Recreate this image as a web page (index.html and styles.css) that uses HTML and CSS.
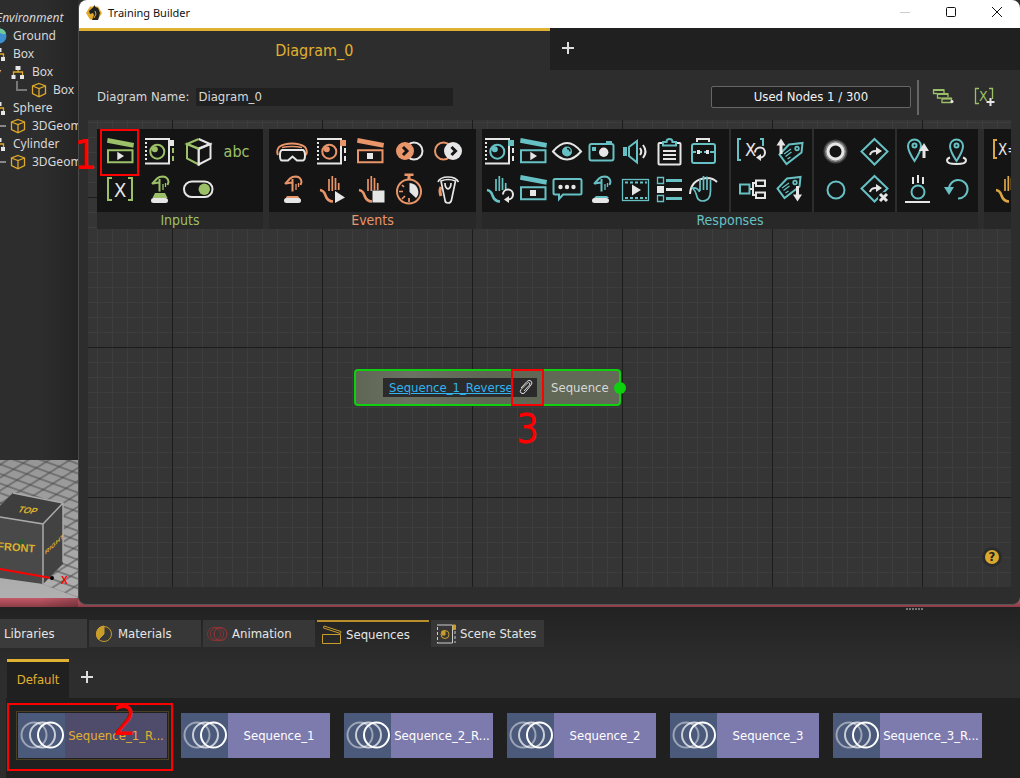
FILE: index.html
```html
<!DOCTYPE html>
<html lang="en">
<head>
    <meta charset="UTF-8">
    <meta name="viewport" content="width=device-width, initial-scale=1.0">
    <title>Training Builder</title>
    <link rel="stylesheet" href="styles.css">
</head>
<body>
    <!-- Shared icons: currentColor is the group colour, .w is the light part -->
    <svg class="sprite" aria-hidden="true">
        <symbol id="clapper" viewBox="0 0 32 32">
            <path class="c" d="M3.7 2 30 7l-.7 4.7L3 6.7z"/>
            <path class="s" d="M4 14.3h24.5v12H4z"/>
        </symbol>
        <symbol id="clapper-play" viewBox="0 0 32 32">
            <use href="#clapper"/><path class="w" d="M13.3 15.7 20 20l-6.7 4.3z"/>
        </symbol>
        <symbol id="clapper-stop" viewBox="0 0 32 32">
            <use href="#clapper"/><path class="w" d="M13 17h6v6h-6z"/>
        </symbol>
        <symbol id="scene-frame" viewBox="0 0 32 32">
            <path class="ws" d="M2 3h24v24.500H2"/>
            <path class="ws" stroke-dasharray="2 2" d="M3 6v20"/>
            <circle class="s" cx="14.300" cy="15.700" r="7"/>
            <circle class="c" cx="11.800" cy="13.200" r="3"/>
        </symbol>
        <symbol id="scene" viewBox="0 0 32 32">
            <use href="#scene-frame"/>
            <path class="c" d="M25 4h6v6h-6z"/>
            <path class="ws" stroke-dasharray="5 3" d="M30 12v14"/>
        </symbol>
        <symbol id="press" viewBox="0 0 32 32">
            <path class="s" d="M9 11l5-5.500Q16 3.500 20 3.500q5 .5 5.500 5.500l-1 3"/>
            <path class="s" d="M16.500 6v12.500M10 10.500l5.500-1"/>
            <path class="s thin" d="M20 11v6M22.500 10v4"/>
        </symbol>
        <symbol id="hand" viewBox="0 0 32 32">
            <path class="s mid" d="M14 6v12M17.300 3v15M20.500 5v12M23.700 10v7"/>
            <path class="s big" d="M5 17q4 .5 5.500 5.500 2 6 7.500 6"/>
        </symbol>
        <symbol id="turn" viewBox="0 0 32 32">
            <path class="ws" d="M20 21.500a5 5 0 1 1 5 5"/><path class="w" d="M26 23v7l-5-3.500z"/>
        </symbol>
        <symbol id="diamond" viewBox="0 0 32 32">
            <path class="s" d="M15.500 3 28.500 15.500l-13 13-13-13z"/>
            <path class="ws" d="M11 19q1-4.500 7-4"/><path class="w" d="M17 11l6 4-6 4z"/>
        </symbol>
        <symbol id="tag" viewBox="0 0 32 32">
            <path class="s" d="M15 8.500 28.500 7l-1 9.500L12.500 28 5.500 18.500z"/>
            <circle class="s mid" cx="23" cy="12.500" r="1.800"/>
            <path class="s thin" d="M10 18l7-5M11.500 20.500l6-4.500M13.500 23l3-2"/>
        </symbol>
        <symbol id="pin" viewBox="0 0 32 32">
            <path class="s" d="M16.500 25Q10 15 10 10a6.500 6.500 0 0 1 13 0q0 5-6.500 15z"/>
            <circle class="s" cx="16.500" cy="9.500" r="2"/>
        </symbol>
        <symbol id="cube" viewBox="0 0 16 16">
            <path class="s thin" d="M8 1.500l6.500 2.500v7.500L8 14.800l-6.500-3.300V4zM1.500 4 8 6.500 14.500 4M8 6.500v8"/>
        </symbol>
        <symbol id="tree-node" viewBox="0 0 16 16">
            <path class="s thin" d="M3.500 11V8h9v3M8 4v4"/>
            <path class="w" d="M5.500 2h5v4h-5zM1.500 11h4v4h-4zM10 11h4v4h-4z"/>
        </symbol>
        <symbol id="rings" viewBox="0 0 44 28">
            <circle cx="14" cy="14" r="12.500" opacity=".45"/>
            <circle cx="22.500" cy="14" r="12.500" opacity=".7"/>
            <circle cx="30.500" cy="14" r="12.500"/>
        </symbol>
    </svg>

    <main class="workspace">
        <aside class="sidebar">
            <ul class="tree">
                <li class="root">Environment</li>
                <li class="d1"><svg class="icon16" viewBox="0 0 16 16"><circle cx="8" cy="8" r="7.500" fill="#3d8fd0"/><path d="M8 .5a7 7 0 0 1 7 5l-2 1-5-2z" fill="#6fc79a"/></svg>Ground</li>
                <li class="d1"><svg class="icon16"><use href="#tree-node"/></svg>Box</li>
                <li class="d2"><span class="arrow">▾</span><svg class="icon16"><use href="#tree-node"/></svg>Box</li>
                <li class="d3"><span class="elbow"></span><svg class="icon16"><use href="#cube"/></svg>Box</li>
                <li class="d1"><svg class="icon16"><use href="#tree-node"/></svg>Sphere</li>
                <li class="d2"><span class="dash"></span><svg class="icon16"><use href="#cube"/></svg>3DGeometry</li>
                <li class="d1"><svg class="icon16"><use href="#tree-node"/></svg>Cylinder</li>
                <li class="d2"><span class="dash"></span><svg class="icon16"><use href="#cube"/></svg>3DGeometry</li>
            </ul>
            <svg class="viewport" viewBox="0 0 79 138" preserveAspectRatio="xMinYMin slice">
                <defs>
                    <linearGradient id="floor" x1="0" y1="0" x2="0" y2="1"><stop offset="0" stop-color="#969696"/><stop offset="1" stop-color="#b0b0b0"/></linearGradient>
                    <pattern id="lines-a" width="20" height="9" patternUnits="userSpaceOnUse" patternTransform="rotate(20)"><path d="M0 4h20" stroke="#4c4c4c"/></pattern>
                    <pattern id="lines-b" width="20" height="11" patternUnits="userSpaceOnUse" patternTransform="rotate(-32)"><path d="M0 4h20" stroke="#4c4c4c"/></pattern>
                </defs>
                <path d="M0 0h79v138H0z" fill="url(#floor)"/>
                <path d="M0 0h79v138L0 108z" fill="url(#lines-a)"/>
                <path d="M0 0h79v138L0 108z" fill="url(#lines-b)"/>
                <path d="M0 46 13 33l50 10v61l-20 20-43-6z" fill="#494949"/>
                <path d="M0 46 13 33l50 10-20 21-43-7z" fill="#3e3e3e"/>
                <path d="M43 64l20-21v59l-20 22z" fill="#424242"/>
                <path d="M0 57l43 7v60M43 64l20-21M13 33l50 10v59" fill="none" stroke="#aaa" stroke-width="1.500"/>
                <path d="M19 80h5l-3 8zM0 107l8-7" fill="#265f2b" stroke="#265f2b"/>
                <text class="face" x="-3" y="90" font-size="11" transform="rotate(4 0 90)">FRONT</text>
                <text class="face" x="0" y="0" font-size="9" transform="translate(17 52) rotate(7) skewX(-25)">TOP</text>
                <text class="face" x="0" y="0" font-size="6" transform="translate(45 95) skewY(-43)">RIGHT</text>
                <path d="M0 109l51 9" stroke="#f00" stroke-width="2"/>
                <circle cx="52" cy="118" r="2" fill="#000"/>
                <text class="axis" x="61" y="124" font-size="10">X</text>
            </svg>
        </aside>

        <section class="window">
            <header class="titlebar">
                <svg class="logo" viewBox="0 0 16 16"><path d="M4 1.500h8L16 8l-4 6.500H4L0 8z" fill="#e0a92a"/><path d="M3 6 7 2.500 8.500 0l1 2L12 3l2 5-2 7H6l2-5-1-2-3 1z" fill="#222"/><path d="M9 6l1 3-2 4" stroke="#e0a92a" fill="none"/></svg>
                <h1>Training Builder</h1>
                <button class="win-btn min" aria-label="Minimize"><svg viewBox="0 0 10 10"><path d="M0 5.500h10"/></svg></button>
                <button class="win-btn" aria-label="Maximize"><svg viewBox="0 0 10 10"><rect x=".5" y=".5" width="9" height="9" rx="1"/></svg></button>
                <button class="win-btn" aria-label="Close"><svg viewBox="0 0 10 10"><path d="M0 0l10 10M10 0 0 10"/></svg></button>
            </header>
            <nav class="diagram-tabs">
                <button class="diagram-tab">Diagram_0</button>
                <button class="add" aria-label="Add diagram"><svg viewBox="0 0 14 14"><path d="M7 1v12M1 7h12"/></svg></button>
            </nav>
            <div class="name-row">
                <label for="diagram-name">Diagram Name:</label>
                <input type="text" id="diagram-name" value="Diagram_0">
                <button class="used-nodes">Used Nodes 1 / 300</button>
                <span class="divider"></span>
                <button class="tool inputs" aria-label="Cascade"><svg viewBox="0 0 32 32"><path class="s thin" d="M10 12.500H6.500V9H17v3M14 17h-3.500v-4H21v3M15 17.500h9.500v4H15z"/><path class="c" d="M6 8h11v2H6zM10 12h11v2H10zM14.500 16.500h10v2h-10z"/><circle class="w" cx="25" cy="20.500" r="1.500"/></svg></button>
                <button class="tool inputs" aria-label="Add variable"><svg viewBox="0 0 32 32"><path class="s thin" d="M10 7.500H6.500v15H10M20 7.500h3.500V18"/><text class="c" x="10" y="20" font-size="14">X</text><path class="ws" d="M21.500 17v8M17.500 21h8"/></svg></button>
            </div>

            <div class="canvas">
                <div class="toolbar">
                    <section class="group inputs">
                        <div class="panels">
                            <div class="panel cols-4">
                                <button class="tool" aria-label="Sequence"><svg><use href="#clapper-play"/></svg></button>
                                <button class="tool" aria-label="Scene state"><svg viewBox="0 0 32 32"><use href="#scene-frame"/><path class="w" d="M26 4h5v6h-5z"/><path class="s" stroke-dasharray="5 3" d="M30 12v14"/></svg></button>
                                <button class="tool" aria-label="Object"><svg viewBox="0 0 32 32"><path class="s" d="M5 8v14.500l11.700 6V13z"/><path class="ws" d="M28.500 8v14.500l-11.800 6V13z"/><path class="ws" d="M16.700 3 28 8l-11.300 4.500"/><path class="s" d="M16.700 3 5 8l11.700 4.500"/></svg></button>
                                <button class="tool abc">abc</button>
                                <button class="tool" aria-label="Variable"><svg viewBox="0 0 32 32"><path class="s" d="M8 5H4v22h4M24 5h4v22h-4"/><text class="w" x="10" y="24" font-size="20">X</text></svg></button>
                                <button class="tool" aria-label="Button"><svg viewBox="0 0 32 32"><use href="#press"/><path class="c" d="M12 20h10l2.500 5h-15z"/><rect class="w" x="8" y="25" width="17" height="5" rx="2.500"/></svg></button>
                                <button class="tool" aria-label="Toggle"><svg viewBox="0 0 32 32"><rect class="ws" x="2" y="8.500" width="28.500" height="15.500" rx="7.700"/><circle class="c" cx="22.300" cy="16.300" r="5.700"/></svg></button>
                            </div>
                        </div>
                        <h2>Inputs</h2>
                    </section>

                    <section class="group events">
                        <div class="panels">
                            <div class="panel cols-5">
                                <button class="tool" aria-label="Headset"><svg viewBox="0 0 32 32"><path class="s" d="M2 19q-2-4 1-8 5-3.500 13-3.500T29 11q3 4 1 8"/><path class="s thin" d="M6 11.500q10-2 20 0"/><path class="ws" d="M6 14h21q2 1 2 5.500t-2 5h-6l-4.500-4-4.500 4H6q-2 0-2-5T6 14z"/></svg></button>
                                <button class="tool" aria-label="Scene event"><svg><use href="#scene"/></svg></button>
                                <button class="tool" aria-label="Sequence stopped"><svg><use href="#clapper-stop"/></svg></button>
                                <button class="tool" aria-label="Enter"><svg viewBox="0 0 32 32"><circle class="ws" cx="21" cy="15" r="8.500"/><circle class="c" cx="12" cy="15" r="9"/><path class="k" d="M10 11l4 4-4 4"/></svg></button>
                                <button class="tool" aria-label="Leave"><svg viewBox="0 0 32 32"><circle class="s" cx="11.500" cy="15" r="8.500"/><circle class="w" cx="21" cy="15" r="9"/><path class="k" d="M19.500 11l4 4-4 4"/></svg></button>
                                <button class="tool" aria-label="Pressed"><svg viewBox="0 0 32 32"><use href="#press"/><path class="c" d="M11 23h11l2 3H9z"/><rect class="w" x="8" y="25" width="17" height="5" rx="2.500"/></svg></button>
                                <button class="tool" aria-label="Grab start"><svg viewBox="0 0 32 32"><use href="#hand"/><path class="w" d="M20 18l10 6.500L20 30z"/></svg></button>
                                <button class="tool" aria-label="Grab stop"><svg viewBox="0 0 32 32"><use href="#hand"/><path class="w" d="M18.500 17.500h12v12h-12z"/></svg></button>
                                <button class="tool" aria-label="Timer"><svg viewBox="0 0 32 32"><circle class="s" cx="16" cy="18.500" r="12"/><path class="c" d="M11.500.5h9V3h-9zM14.500 3h3v3h-3z"/><path class="w" d="M16.500 10a9 9 0 0 1 6.500 15l-6.500-6z"/><path class="s mid" d="M6 18.500h4M16 29v-4M9 12l2 2M9 26l3-3"/></svg></button>
                                <button class="tool" aria-label="Flashlight"><svg viewBox="0 0 32 32"><path class="s hv" d="M9 14q-2 4 0 9"/><path class="ws mid" d="M6 9Q8 4 16 4t10.500 5M9 8l4 19q0 3 3 3t3.500-3l4-19Q16 5 9 8zM13 10q0 5 3 6 3-1 3-6"/></svg></button>
                            </div>
                        </div>
                        <h2>Events</h2>
                    </section>

                    <section class="group responses">
                        <div class="panels">
                            <div class="panel cols-7">
                                <button class="tool" aria-label="Set scene state"><svg><use href="#scene"/></svg></button>
                                <button class="tool" aria-label="Play sequence"><svg><use href="#clapper-play"/></svg></button>
                                <button class="tool" aria-label="Visibility"><svg viewBox="0 0 32 32"><path class="ws" d="M2 15.500Q9 7 16 7t14 8.500Q23 23.500 16 23.500T2 15.500z"/><circle class="c" cx="16" cy="15.500" r="5"/><path class="k thin" d="M16 12.500q3 0 3 3"/></svg></button>
                                <button class="tool" aria-label="Camera"><svg viewBox="0 0 32 32"><rect class="s" x="4.500" y="8" width="24" height="16.500" rx="2"/><path class="c" d="M21 5h6v2.500h-6zM7 11h4v4H7z"/><circle class="w" cx="18.700" cy="16.300" r="4.700"/></svg></button>
                                <button class="tool" aria-label="Sound"><svg viewBox="0 0 32 32"><path class="c" d="M4 11h4v9H4z"/><path class="s" d="M10 11 18 5v21.500L10 20z"/><path class="ws" d="M21 12q2.500 3.500 0 7M24 9q5 6.500 0 13"/></svg></button>
                                <button class="tool" aria-label="Checklist"><svg viewBox="0 0 32 32"><rect class="ws" x="5.500" y="7" width="22" height="21.500" rx="1"/><path class="kf" d="M10 5h13v6H10z"/><path class="s" d="M10 9.500V6h3.500q0-3 3-3t3 3H23v3.500z"/><path class="ws" d="M10 15h13M10 19h13M10 23h13"/></svg></button>
                                <button class="tool" aria-label="Inventory"><svg viewBox="0 0 32 32"><path class="ws" d="M10 6V3h12v3"/><rect class="s" x="5" y="8" width="23" height="19" rx="2"/><path class="s" stroke-dasharray="4 2" d="M5 16h23"/><path class="w" d="M10 14h3v4h-3zM19 14h3v4h-3z"/></svg></button>
                                <button class="tool" aria-label="Reset hand"><svg viewBox="0 0 32 32"><use href="#hand" x="-1"/><path class="kf" d="M18 17.500h12V32H18z"/><use href="#turn"/></svg></button>
                                <button class="tool" aria-label="Stop sequence"><svg><use href="#clapper-stop"/></svg></button>
                                <button class="tool" aria-label="Message"><svg viewBox="0 0 32 32"><path class="s" d="M4 6h25q1.500 0 1.500 1.500V20q0 1.500-1.500 1.500H12L8 26v-4.500H4q-1.500 0-1.500-1.500V7.500Q2.500 6 4 6z"/><circle class="w" cx="9.500" cy="14" r="2.200"/><circle class="w" cx="16" cy="14" r="2.200"/><circle class="w" cx="22.500" cy="14" r="2.200"/></svg></button>
                                <button class="tool" aria-label="Press button"><svg viewBox="0 0 32 32"><use href="#press"/><path class="c" d="M11 23h11l2 2H9z"/><rect class="w" x="7" y="25" width="17" height="5" rx="2.500"/></svg></button>
                                <button class="tool" aria-label="Video"><svg viewBox="0 0 32 32"><rect class="s thin" x="3.500" y="6.500" width="26" height="21"/><path class="s" stroke-dasharray="3 2" d="M6 9.500h22M6 25h22"/><path class="w" d="M13 11.500l9 5.500-9 5.500z"/></svg></button>
                                <button class="tool" aria-label="Options"><svg viewBox="0 0 32 32"><path class="s thin" d="M4.500 4.500h6v6h-6zM4.500 22.500h6v6h-6z"/><path class="w" d="M4 13h7v7H4zM13 15h16v3H13z"/><path class="c" d="M13 6h16v3H13zM13 24h16v3H13z"/></svg></button>
                                <button class="tool" aria-label="Wave"><svg viewBox="0 0 32 32"><path class="ws" d="M3 21Q4 6 20 5q6 0 10 4"/><path class="s mid" d="M13 6v12M16.500 3v14M20 3.500V17M23.500 7v11q0 10-8 10-5 0-6-6-1-4-4-7 5-1 7 4"/></svg></button>
                            </div>
                            <div class="panel cols-2">
                                <button class="tool" aria-label="Reset variable"><svg viewBox="0 0 32 32"><path class="s" d="M6 3H3v21h3M25 3h3v7"/><text class="w" x="10" y="20" font-size="18">X</text><use href="#turn" y="-5"/></svg></button>
                                <button class="tool" aria-label="Tag add"><svg viewBox="0 0 32 32"><use href="#tag"/><path class="w" d="M7 2.500l4.500 7h-3V18h-3V9.500h-3z"/></svg></button>
                                <button class="tool" aria-label="Hierarchy"><svg viewBox="0 0 32 32"><path class="s" d="M5 11.500h9.500v9H5z"/><path class="ws" d="M15 16h3M21 10h-3v12h3M21 7.500h9V13h-9zM21 19.500h9V25h-9z"/></svg></button>
                                <button class="tool" aria-label="Tag remove"><svg viewBox="0 0 32 32"><use href="#tag" x="-2" y="-3"/><path class="w" d="M23.500 28.500l4.500-7h-3V13h-3v8.500h-3z"/></svg></button>
                            </div>
                            <div class="panel cols-2 shift">
                                <button class="tool" aria-label="Glow on"><svg viewBox="0 0 32 32"><circle cx="15.500" cy="15.500" r="12" fill="#444"/><circle cx="15.500" cy="15.500" r="10.500" fill="#888"/><circle class="kf" cx="15.500" cy="15.500" r="8"/><circle class="ws hv" cx="15.500" cy="15.500" r="7.500"/></svg></button>
                                <button class="tool" aria-label="Go to"><svg><use href="#diamond"/></svg></button>
                                <button class="tool" aria-label="Glow off"><svg viewBox="0 0 32 32"><circle class="s" cx="16" cy="17" r="8.500"/></svg></button>
                                <button class="tool" aria-label="Cancel go to"><svg viewBox="0 0 32 32"><use href="#diamond"/><circle class="kf" cx="25" cy="25" r="6"/><path class="ws hv" d="M21 21l7 7M28 21l-7 7"/></svg></button>
                            </div>
                            <div class="panel cols-2">
                                <button class="tool" aria-label="Teleport"><svg viewBox="0 0 32 32"><use href="#pin" x="-3"/><path class="w" d="M23 7l5 8h-3.500v7h-3v-7H18z"/></svg></button>
                                <button class="tool" aria-label="Location"><svg viewBox="0 0 32 32"><path class="ws" d="M10 21.500q-3 1-3 3 0 3.500 9.500 3.500t9.500-3.500q0-2-3-3"/><use href="#pin"/></svg></button>
                                <button class="tool" aria-label="Drop"><svg viewBox="0 0 32 32"><circle class="s" cx="17" cy="19" r="6.500"/><path class="ws" d="M12 4v7M17 2v8M22 4v7M4 29h25"/></svg></button>
                                <button class="tool" aria-label="Undo"><svg viewBox="0 0 32 32"><path class="s" d="M9 17a9.300 9.300 0 1 1 9 8.500"/><path class="c" d="M4 14h10l-5 8z"/></svg></button>
                            </div>
                        </div>
                        <h2>Responses</h2>
                    </section>

                    <section class="group variables">
                        <div class="panels">
                            <div class="panel cols-1">
                                <button class="tool" aria-label="Compare"><svg viewBox="0 0 32 32"><path class="s" d="M6 4H3v18h3"/><text class="w" x="7" y="19" font-size="15">X=</text></svg></button>
                                <button class="tool" aria-label="Hand"><svg><use href="#hand"/></svg></button>
                            </div>
                        </div>
                    </section>
                </div>

                <div class="node">
                    <div class="node-field">
                        <a href="#">Sequence_1_Reverse</a>
                        <button aria-label="Attach"><svg viewBox="0 0 16 16"><path d="M3 9 9 2.500q2-2 4-.5 2 2 0 4L7 13.500q-2 2-4 .5-1.500-1.500 0-3.500L9.500 4q1-1 2 0 .8 1 0 2L6 12"/></svg></button>
                    </div>
                    <span>Sequence</span>
                    <i class="port"></i>
                </div>
                <button class="help" aria-label="Help">?</button>
            </div>

            <div class="mark mark-1"></div>
            <span class="num num-1">1</span>
            <div class="mark mark-3"></div>
            <span class="num num-3">3</span>
        </section>
    </main>

    <section class="libraries">
        <div class="grip"></div>
        <nav class="lib-tabs">
            <h2>Libraries</h2>
            <button><svg viewBox="0 0 20 20"><circle cx="10" cy="10" r="7.500"/><path class="c" d="M10 2v8l-5.500 5.500Q2 13 2.500 9 3.500 2.500 10 2z"/></svg>Materials</button>
            <button class="animation"><svg viewBox="0 0 22 16"><circle cx="8" cy="8" r="6.500" opacity=".6"/><circle cx="11" cy="8" r="6.500" opacity=".7"/><circle cx="14.500" cy="8" r="6.500"/></svg>Animation</button>
            <button class="active"><svg viewBox="0 0 20 20"><path d="M.5 9.500h18v9H.5zM2 1l17 5.500-.5 2L1.500 3z"/></svg>Sequences</button>
            <button class="scene-tab"><svg viewBox="0 0 20 20"><path d="M1 1h15.500v18H1" stroke="#ccc"/><path d="M1.500 3v16M19 7v12" stroke="#ccc" stroke-dasharray="3 2"/><circle cx="9" cy="10.500" r="4"/><path class="c" d="M17 1h2.500v4.500H17zM6 7h3v4H6z"/></svg>Scene States</button>
        </nav>
        <nav class="lib-groups">
            <button class="default">Default</button>
            <button class="add" aria-label="Add group"><svg viewBox="0 0 14 14"><path d="M7 1v12M1 7h12"/></svg></button>
        </nav>
        <div class="cards">
            <button class="card selected"><span class="thumb"><svg class="rings"><use href="#rings"/></svg></span><span class="name">Sequence_1_R...</span></button>
            <button class="card"><span class="thumb"><svg class="rings"><use href="#rings"/></svg></span><span class="name">Sequence_1</span></button>
            <button class="card"><span class="thumb"><svg class="rings"><use href="#rings"/></svg></span><span class="name">Sequence_2_R...</span></button>
            <button class="card"><span class="thumb"><svg class="rings"><use href="#rings"/></svg></span><span class="name">Sequence_2</span></button>
            <button class="card"><span class="thumb"><svg class="rings"><use href="#rings"/></svg></span><span class="name">Sequence_3</span></button>
            <button class="card"><span class="thumb"><svg class="rings"><use href="#rings"/></svg></span><span class="name">Sequence_3_R...</span></button>
            <div class="mark mark-2"></div>
            <span class="num num-2">2</span>
        </div>
    </section>
</body>
</html>
```
FILE: styles.css
```css
* {
    box-sizing: border-box;
}
body {
    margin: 0;
    height: 100vh;
    display: flex;
    flex-direction: column;
    overflow: hidden;
    background: #2d2d2d;
    color: #d8d8d8;
    font: 13px/18px "DejaVu Sans Condensed", "Noto Sans", sans-serif;
}
button, input {
    font: inherit;
    color: inherit;
    background: none;
    border: 0;
    padding: 0;
}
h1, h2 {
    margin: 0;
    font-size: 13px;
    font-weight: normal;
}
svg {
    flex: none;
    fill: none;
}
.sprite {
    position: absolute;
    width: 0;
    height: 0;
}

/* icon parts */
.c { fill: currentColor; }
.s { fill: none; stroke: currentColor; stroke-width: 2; }
.w { fill: #e6e6e6; }
.ws { fill: none; stroke: #e6e6e6; stroke-width: 2; }
.k { fill: none; stroke: #141414; stroke-width: 3; }
.kf { fill: #141414; }
.thin { stroke-width: 1.3; }
.mid { stroke-width: 1.7; }
.big { stroke-width: 2.6; }
.hv { stroke-width: 3; }

.workspace {
    flex: 1;
    min-height: 0;
    display: flex;
    background: linear-gradient(to top, #8c3c46 0, #c45a68 9px, #2d2d2d 9px);
}

/* scene tree */
.sidebar {
    width: 78px;
    flex: none;
    display: flex;
    flex-direction: column;
    justify-content: space-between;
    overflow: hidden;
    padding-bottom: 9px;
    background: linear-gradient(to right, transparent 40px, rgba(0, 0, 0, 0.2));
}
.tree {
    list-style: none;
    margin: 8px 0 0 -10px;
    padding: 0;
    font-family: "Noto Sans", "Open Sans", sans-serif;
    font-size: 12px;
    white-space: nowrap;
}
.tree li {
    display: flex;
    align-items: center;
    gap: 6px;
    height: 18px;
    padding-top: 1px;
}
.tree .root {
    padding-left: 6px;
    font-style: italic;
}
.tree .d1 {
    padding-left: 1px;
}
.tree .d2 {
    padding-left: 5px;
}
.tree .d3 {
    padding-left: 26px;
}
.arrow {
    width: 11px;
    margin-right: -2px;
}
.dash {
    flex: none;
    width: 11px;
    height: 2px;
    margin-right: -2px;
    background: #888;
}
.elbow {
    flex: none;
    width: 11px;
    height: 10px;
    margin-top: -8px;
    margin-right: -2px;
    border-left: 2px solid #777;
    border-bottom: 2px solid #777;
}
.icon16 {
    width: 16px;
    height: 16px;
    color: #e0a92a;
}
.viewport {
    width: 79px;
    height: 138px;
}
.face, .axis {
    font-family: "Liberation Sans", Arial, sans-serif;
    font-weight: bold;
    fill: #dcb02e;
}
.axis {
    fill: #f00;
}

/* training builder window */
.window {
    position: relative;
    flex: 1;
    min-width: 0;
    display: flex;
    flex-direction: column;
    margin-bottom: 2px;
    border-left: 1px solid #4a4a4a;
    border-bottom: 1px solid #555;
    border-radius: 8px;
    background: #2d2d2d;
}
.titlebar {
    height: 28px;
    display: flex;
    align-items: center;
    background: #fff;
    color: #111;
    border-radius: 8px 8px 0 0;
    padding-bottom: 2px;
}
.titlebar h1 {
    flex: 1;
    font-family: "Noto Sans", "Open Sans", sans-serif;
    font-size: 11px;
}
.logo {
    width: 16px;
    height: 16px;
    margin: 0 6px 0 7px;
}
.win-btn {
    width: 46px;
    height: 26px;
}
.win-btn svg {
    width: 10px;
    height: 10px;
    stroke: #111;
    overflow: visible;
}
.win-btn.min svg {
    stroke: #ccc;
}
.diagram-tabs {
    display: flex;
    height: 42px;
    background: #202020;
}
.diagram-tab {
    width: 50%;
    background: #2d2d2d;
    border-top: 3px solid #e0b030;
    color: #e0b030;
    font-size: 16px;
    line-height: 22px;
}
.add {
    width: 36px;
    padding-bottom: 4px;
}
.add svg {
    width: 14px;
    height: 14px;
    stroke: #ddd;
    stroke-width: 2;
    vertical-align: middle;
}
.name-row {
    display: flex;
    align-items: center;
    height: 50px;
    padding: 4px 14px 0 18px;
}
.name-row input {
    width: 257px;
    height: 18px;
    margin-left: 7px;
    margin-right: auto;
    padding: 0 2px;
    background: #202020;
}
.used-nodes {
    width: 200px;
    height: 22px;
    margin-right: 6px;
    color: #f2f2f2;
    background: #202020;
    border: 1px solid #666;
    border-radius: 2px;
}
.divider {
    width: 2px;
    height: 35px;
    margin-right: 3px;
    background: #666;
}

/* node canvas */
.canvas {
    position: relative;
    flex: 1;
    min-height: 0;
    margin: 0 9px 17px 9px;
    padding: 9px 0 0 9px;
    overflow: hidden;
    background-color: #353535;
    background-image:
        linear-gradient(to right, #1c1c1c 1px, transparent 1px),
        linear-gradient(to bottom, #1c1c1c 1px, transparent 1px),
        linear-gradient(to right, #3d3d3d 1px, transparent 1px),
        linear-gradient(to bottom, #3d3d3d 1px, transparent 1px);
    background-size: 150px 150px, 150px 150px, 15px 15px, 15px 15px;
    background-position: 84px 77px, 84px 77px, 9px 2px, 9px 2px;
}
.toolbar {
    display: flex;
    gap: 6px;
    background: #2d2d2d;
}
.group {
    flex: none;
    background: #282828;
}
.group h2 {
    height: 17px;
    font-size: 14px;
    line-height: 17px;
    text-align: center;
}
.panels {
    display: flex;
    gap: 2px;
    background: #2d2d2d;
}
.panel {
    display: grid;
    grid-auto-rows: 37px;
    padding: 4px 7px 5px 3px;
    background: #141414;
}
.cols-1 { grid-template-columns: 39px; }
.cols-4 { grid-template-columns: repeat(4, 39px); }
.cols-5 { grid-template-columns: repeat(5, 39px); padding-right: 9px; }
.cols-7 { grid-template-columns: repeat(7, 34px); padding-left: 0; padding-right: 9px; }
.cols-2 { grid-template-columns: repeat(2, 39px); padding-left: 0; padding-right: 3px; }
.shift { padding-left: 2px; padding-right: 1px; }
.inputs { color: #9cc068; }
.events { color: #e9956a; }
.responses { color: #67c1c4; }
.variables { color: #dba544; }
.tool {
    display: flex;
    align-items: center;
    justify-content: center;
}
.tool svg {
    width: 32px;
    height: 32px;
}
.name-row .tool {
    width: 42px;
}
.abc {
    font-size: 16px;
}

.node {
    position: absolute;
    left: 266px;
    top: 249px;
    display: flex;
    align-items: center;
    width: 267px;
    height: 37px;
    padding-left: 27px;
    border: 2px solid #0fd00f;
    border-radius: 4px;
    background: linear-gradient(to right, #5f6654, #6b7263 20%, #5f6654 50%, #636a58);
}
.node-field {
    display: flex;
    align-items: center;
    width: 154px;
    height: 19px;
    margin-right: 14px;
    padding-left: 6px;
    background: #2b2b2b;
}
.node-field a {
    flex: none;
    width: 125px;
    color: #30b4f0;
    text-underline-offset: 1px;
}
.node-field button {
    width: 23px;
    height: 18px;
}
.node-field svg {
    width: 16px;
    height: 16px;
    stroke: #ddd;
    vertical-align: top;
    overflow: visible;
}
.port {
    position: absolute;
    right: -7px;
    top: 11px;
    width: 12px;
    height: 12px;
    border-radius: 50%;
    background: #0fd00f;
}
.help {
    position: absolute;
    right: 12px;
    bottom: 23px;
    width: 14px;
    height: 14px;
    border-radius: 50%;
    background: #dba82e;
    box-shadow: 0 0 0 3px #2b2b2b;
    color: #222;
    font-weight: bold;
    line-height: 14px;
}

/* callouts */
.mark {
    position: absolute;
    border: 2px solid #f00;
}
.num {
    position: absolute;
    color: #f00;
    font-size: 40px;
    line-height: 40px;
}
.mark-1 { left: 21px; top: 129px; width: 39px; height: 47px; }
.num-1 { left: -5px; top: 135px; }
.mark-3 { left: 432px; top: 369px; width: 33px; height: 37px; }
.num-3 { left: 437px; top: 409px; }
.mark-2 { left: 1px; top: 5px; width: 166px; height: 68px; }
.num-2 { left: 107px; top: 3px; }

/* libraries dock */
.libraries {
    display: flex;
    flex-direction: column;
    background: linear-gradient(to bottom, #222, #2d2d2d 60px);
}
.grip {
    width: 17px;
    height: 2px;
    margin: 1px 97px 9px auto;
    background: repeating-linear-gradient(to right, #777 0 2px, transparent 2px 3px);
}
.lib-tabs {
    display: flex;
    gap: 2px;
    height: 29px;
    color: #e6e6e6;
}
.lib-tabs h2 {
    width: 87px;
    padding: 6px 4px;
    background: #3b3b3b;
}
.lib-tabs button {
    display: flex;
    align-items: center;
    gap: 4px;
    width: 112px;
    margin: 1px 0;
    padding-left: 5px;
    background: #373737;
}
.lib-tabs svg {
    width: 20px;
    height: 20px;
    color: #c99d2b;
    stroke: #c99d2b;
}
.lib-tabs .animation svg {
    width: 22px;
    stroke: #a83234;
}
.lib-tabs .animation {
    padding-left: 3px;
}
.lib-tabs .scene-tab {
    width: 113px;
}
.lib-tabs .active {
    background: none;
    border-top: 2px solid #b98f2a;
}
.lib-groups {
    display: flex;
    height: 39px;
    margin: 11px 0 0 7px;
}
.default {
    width: 62px;
    background: #202020;
    border-top: 3px solid #e0b030;
    color: #e0b030;
}
.cards {
    position: relative;
    display: flex;
    gap: 14px;
    height: 80px;
    margin-left: 6px;
    padding: 15px 12px;
    background: #202020;
}
.card {
    display: flex;
    flex: none;
    width: 149px;
    height: 45px;
    background: #7d7aad;
    color: #fff;
}
.thumb {
    width: 47px;
    padding: 8px 0;
    background: #4b5a7b;
}
.rings {
    width: 44px;
    height: 28px;
    stroke: #fff;
    stroke-width: 2;
}
.name {
    flex: 1;
    line-height: 45px;
}
.selected {
    background: #4f4c6b;
    color: #e0b030;
    outline: 1px solid #4a3f22;
    outline-offset: 1px;
}
```
